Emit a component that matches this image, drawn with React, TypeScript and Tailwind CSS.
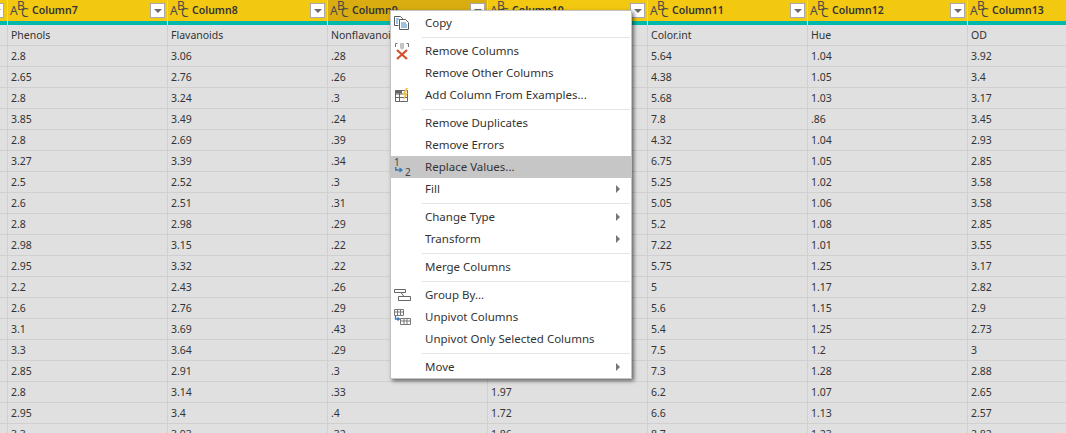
const font = "[font-family:'Noto_Sans','Open_Sans',sans-serif]";

const columns = ["Column7", "Column8", "Column9", "Column10", "Column11", "Column12", "Column13"];

const rows = [
  ["Phenols", "Flavanoids", "Nonflavanoids", "Proanthocyanins", "Color.int", "Hue", "OD"],
  ["2.8", "3.06", ".28", "2.29", "5.64", "1.04", "3.92"],
  ["2.65", "2.76", ".26", "1.28", "4.38", "1.05", "3.4"],
  ["2.8", "3.24", ".3", "2.81", "5.68", "1.03", "3.17"],
  ["3.85", "3.49", ".24", "2.18", "7.8", ".86", "3.45"],
  ["2.8", "2.69", ".39", "1.82", "4.32", "1.04", "2.93"],
  ["3.27", "3.39", ".34", "1.97", "6.75", "1.05", "2.85"],
  ["2.5", "2.52", ".3", "1.98", "5.25", "1.02", "3.58"],
  ["2.6", "2.51", ".31", "1.25", "5.05", "1.06", "3.58"],
  ["2.8", "2.98", ".29", "1.98", "5.2", "1.08", "2.85"],
  ["2.98", "3.15", ".22", "1.85", "7.22", "1.01", "3.55"],
  ["2.95", "3.32", ".22", "2.38", "5.75", "1.25", "3.17"],
  ["2.2", "2.43", ".26", "1.57", "5", "1.17", "2.82"],
  ["2.6", "2.76", ".29", "1.81", "5.6", "1.15", "2.9"],
  ["3.1", "3.69", ".43", "2.81", "5.4", "1.25", "2.73"],
  ["3.3", "3.64", ".29", "2.96", "7.5", "1.2", "3"],
  ["2.85", "2.91", ".3", "1.46", "7.3", "1.28", "2.88"],
  ["2.8", "3.14", ".33", "1.97", "6.2", "1.07", "2.65"],
  ["2.95", "3.4", ".4", "1.72", "6.6", "1.13", "2.57"],
  ["3.3", "3.93", ".32", "1.86", "8.7", "1.23", "2.82"],
];

const DropButton = () => (
  <div className="flex h-[15px] w-[15px] shrink-0 items-center justify-center border border-[#a8a8a8] bg-white">
    <div className="h-0 w-0 border-x-[4px] border-t-[4px] border-x-transparent border-t-[#6b6b6b]" />
  </div>
);

const TypeIcon = () => (
  <span className={`relative block h-[21px] w-[18px] shrink-0 text-[#4a4a4a] ${font}`}>
    <span className="absolute left-0 top-[5px] text-[12px] leading-[12px]">A</span>
    <span className="absolute left-[7px] top-0 text-[12px] leading-[12px]">B</span>
    <span className="absolute left-[11px] top-[7px] text-[12px] leading-[12px]">C</span>
  </span>
);

const HeaderCell = ({ name }: { name: string }) => (
  <div className={`flex h-[21px] items-center border-l border-[#e6d48a] pl-[2px] pr-[2px] ${name === "Column9" ? "bg-[#d9ad10]" : "bg-[#f2c811]"}`}>
    <TypeIcon />
    <span className="ml-[4px] flex-1 text-[10.5px] font-semibold text-[#333]">{name}</span>
    <DropButton />
  </div>
);

const CopyIcon = () => (
  <svg width="16" height="14" viewBox="0 0 16 14" fill="none">
    <path d="M.5.5h6l2 2v1M.5.5v9h4" stroke="#5a5a5a" />
    <path d="M5.5 3.5h6l3 3v7h-9z" fill="#fff" stroke="#5a5a5a" />
    <path d="M7 7h5M7 9h6M7 11h6M2 3h3M2 5h2M2 7h2" stroke="#3a86c8" />
  </svg>
);

const RemoveIcon = () => (
  <svg width="14" height="17" viewBox="0 0 14 17" fill="none">
    <path d="M.5 4V.5h2M13.5 4V.5h-2" stroke="#777" />
    <path d="M5 0h4v5l-2 2-2-2z" fill="#c4c4c4" />
    <path d="M2 7l10 9M12 7L2 16" stroke="#d2502e" strokeWidth="2.2" />
  </svg>
);

const ExamplesIcon = () => (
  <svg width="14" height="14" viewBox="0 0 14 14" fill="none">
    <path d="M.5 2.5h12v11H.5zM.5 6h12M.5 9.5h12M4.5 2.5v11" stroke="#666" />
    <path d="M0 2.5h7v3H0z" fill="#666" />
    <path d="M11 0L7 7h2.5L8 13l5-8h-2.5L13 0z" fill="#f0c24a" />
  </svg>
);

const ReplaceIcon = () => (
  <span className={`relative block h-[20px] w-[18px] text-[10px] text-[#444] ${font}`}>
    <span className="absolute left-[1px] top-0 leading-[10px]">1</span>
    <span className="absolute left-[12px] top-[10px] leading-[10px]">2</span>
    <svg className="absolute left-[2px] top-[10px]" width="8" height="6" viewBox="0 0 8 6" fill="none">
      <path d="M.7 0v3h6M4.5 1l2.5 2-2.5 2" stroke="#3a78b8" strokeWidth="1.4" />
    </svg>
  </span>
);

const GroupIcon = () => (
  <svg width="17" height="12" viewBox="0 0 17 12" fill="none">
    <path d="M.5.5h11v3H.5zM4.5 7.5h12v4h-12zM7 3.5l3 4" stroke="#666" />
  </svg>
);

const UnpivotIcon = () => (
  <svg width="17" height="16" viewBox="0 0 17 16" fill="none">
    <path d="M.5.5h9v6h-9zM.5 3h9M3.5.5v6M6.5.5v6" stroke="#777" />
    <path d="M6.5 9.5h10v6h-10zM6.5 12h10M10 9.5v6M13 9.5v6" stroke="#777" />
    <path d="M1.5 7v3h4M3.5 8.5L5.5 10l-2 1.5" stroke="#3a78b8" strokeWidth="1.3" />
  </svg>
);

type Item = { label: string; icon?: React.ReactNode; active?: boolean; submenu?: boolean };

const menu: (Item | "sep")[] = [
  { label: "Copy", icon: <CopyIcon /> },
  "sep",
  { label: "Remove Columns", icon: <RemoveIcon /> },
  { label: "Remove Other Columns" },
  { label: "Add Column From Examples...", icon: <ExamplesIcon /> },
  "sep",
  { label: "Remove Duplicates" },
  { label: "Remove Errors" },
  { label: "Replace Values...", icon: <ReplaceIcon />, active: true },
  { label: "Fill", submenu: true },
  "sep",
  { label: "Change Type", submenu: true },
  { label: "Transform", submenu: true },
  "sep",
  { label: "Merge Columns" },
  "sep",
  { label: "Group By...", icon: <GroupIcon /> },
  { label: "Unpivot Columns", icon: <UnpivotIcon /> },
  { label: "Unpivot Only Selected Columns" },
  "sep",
  { label: "Move", submenu: true },
];

const ContextMenu = () => (
  <div className="absolute left-[390px] top-[10px] w-[242px] border border-[#c4c4c4] bg-white pt-[1px] shadow-[2px_2px_4px_rgba(0,0,0,0.55)]">
    {menu.map((item, i) =>
      item === "sep" ? (
        <div key={i} className="flex h-[6px] items-center pl-[31px] pr-[1px]">
          <div className="h-px w-full bg-[#e4e4e4]" />
        </div>
      ) : (
        <div key={i} className={`flex h-[22px] items-center ${item.active ? "bg-[#c6c6c6]" : ""}`}>
          <div className="flex w-[34px] shrink-0 justify-center pr-[12px]">{item.icon}</div>
          <span className="flex-1 text-[11.5px] text-[#333]">{item.label}</span>
          {item.submenu && (
            <div className="mr-[11px] h-0 w-0 border-y-[4px] border-l-[4px] border-y-transparent border-l-[#777]" />
          )}
        </div>
      ),
    )}
  </div>
);

export default function App() {
  return (
    <div className={`relative h-[433px] w-[1066px] overflow-hidden bg-[#e0e0e0] ${font}`}>
      <div className="grid w-max grid-cols-[7px_repeat(7,160px)]">
        <div className="flex h-[21px] items-center justify-end overflow-hidden bg-[#f2c811] pr-[3px]">
          <div className="shrink-0">
            <DropButton />
          </div>
        </div>
        {columns.map((c) => (
          <HeaderCell key={c} name={c} />
        ))}
        <div className="h-[4px] bg-[#01b8aa]" />
        {columns.map((c) => (
          <div key={c} className="h-[4px] border-l border-[#e0e0e0] bg-[#01b8aa]" />
        ))}
        {rows.map((row, r) => (
          <div key={r} className="contents">
            <div className="h-[21px] border-b border-[#d0d0d0]" />
            {row.map((v, c) => (
              <div
                key={c}
                className="h-[21px] truncate border-b border-l border-[#d0d0d0] pl-[3px] text-[10.5px] leading-[20px] text-[#333]"
              >
                {v}
              </div>
            ))}
          </div>
        ))}
      </div>
      <ContextMenu />
    </div>
  );
}
